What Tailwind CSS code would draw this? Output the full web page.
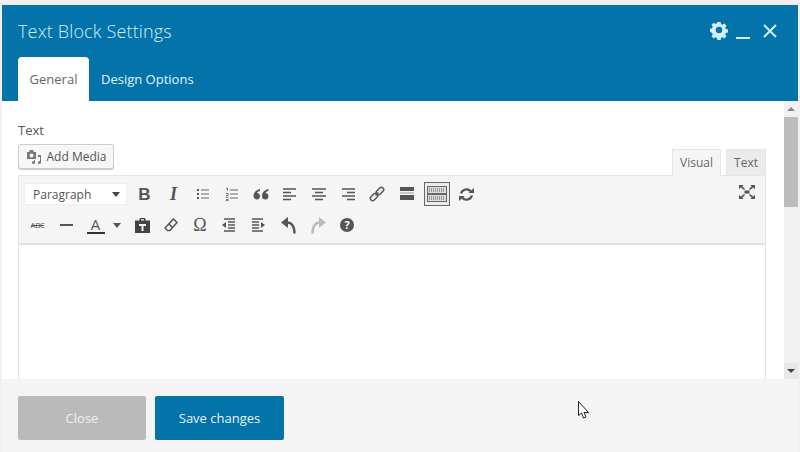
<!DOCTYPE html>
<html>
<head>
  <meta charset="UTF-8">
  <script src="https://cdn.jsdelivr.net/npm/@tailwindcss/browser@4"></script>
</head>
<body class="w-[800px] h-[452px] overflow-hidden bg-[#f0f0f0] font-['Open_Sans',sans-serif]">
  <div class="relative w-[800px] h-[452px] pt-[5px] px-[2px] flex flex-col">
    <!-- header -->
    <div class="h-[96px] shrink-0 bg-[#0473aa] flex flex-col justify-between">
      <div class="flex items-center justify-between pt-[13px] pl-[16px] pr-[20px]">
        <span class="text-[18px] font-light tracking-[0.15px] leading-[26px] text-[#d5eef9]">Text Block Settings</span>
        <div class="flex items-center">
          <svg class="w-[20px] h-[20px] mr-[7px]" viewBox="0 0 20 20"><path fill="#d3edf9" fill-rule="evenodd" d="M8.2 1h3.6l.5 2.4 1.5.7 2.1-1.3 2.4 2.5-1.3 2 .6 1.6 2.4.5v3.4l-2.4.5-.6 1.6 1.3 2-2.4 2.5-2.1-1.3-1.5.7-.5 2.4H8.200l-.5-2.4-1.500-.7-2.100 1.300-2.400-2.500 1.300-2-.6-1.600L0 11.900V8.500l2.400-.5.600-1.600-1.300-2 2.400-2.500 2.100 1.300 1.500-.7zM10 6.400a3.600 3.600 0 1 0 0 7.200 3.600 3.600 0 0 0 0-7.200z" transform="translate(1 0) scale(.9)"/></svg>
          <div class="w-[14px] h-[2px] bg-[#d3edf9] mt-[14px] mr-[12px]"></div>
          <svg class="w-[16px] h-[16px]" viewBox="0 0 16 16"><path d="M2 2l12 12M14 2L2 14" stroke="#d3edf9" stroke-width="2"/></svg>
        </div>
      </div>
      <div class="flex pl-[16px]">
        <div class="w-[71px] h-[44px] bg-white rounded-t-[4px] flex items-center justify-center pt-[1px] text-[13px] text-[#666]">General</div>
        <div class="h-[44px] pl-[12px] pt-[1px] flex items-center text-[13px] font-medium text-[#e3f3fb]">Design Options</div>
      </div>
    </div>
    <!-- body -->
    <div class="h-[278px] shrink-0 bg-white flex overflow-hidden">
      <div class="w-[782px] pl-[16px] pr-[18px] pt-[20px]">
        <div class="text-[13px] leading-[18px] text-[#555]">Text</div>
        <div class="flex items-end justify-between h-[36px]">
          <div class="self-start mt-[5px] w-[96px] h-[25px] rounded-[3px] border border-[#ccc] bg-[#f7f7f7] shadow-[0_1px_0_#ccc] flex items-center justify-center gap-[5px] text-[12px] text-[#555]">
            <svg class="w-[16px] h-[16px]" viewBox="0 0 16 16"><path fill="#777" d="M1 3h2l1-2h3l1 2h2v7H1zM12 6h3v7.500a1.500 1.500 0 1 1-1.500-1.500H14V8h-2zM6 11h3v2.500A1.500 1.500 0 1 1 7.500 12H8v-1z"/><circle cx="5.500" cy="6.500" r="2" fill="#f7f7f7"/></svg>
            <span>Add Media</span>
          </div>
          <div class="flex items-end gap-[5px] text-[12px] text-[#666] -mb-[1px]">
            <div class="w-[49px] h-[27px] bg-[#f5f5f5] border border-[#e5e5e5] border-b-0 flex items-center justify-center relative">Visual</div>
            <div class="w-[40px] h-[27px] bg-[#ebebeb] border border-[#e5e5e5] flex items-center justify-center">Text</div>
          </div>
        </div>
        <!-- editor -->
        <div class="border border-[#e5e5e5] h-[300px] bg-white">
          <div class="h-[69px] bg-[#f5f5f5] border-b-2 border-[#e2e2e2] relative pl-[4px] pt-[6px]">
            <div class="flex items-center h-[24px]">
              <div class="ml-[1px] w-[103px] h-[22px] bg-white border border-[#eee] flex items-center justify-between pl-[8px] pr-[6px] pt-[1px] text-[12px] text-[#555]">
                <span>Paragraph</span>
                <div class="w-0 h-0 border-x-[4px] border-x-transparent border-t-[5px] border-t-[#444]"></div>
              </div>
              <div class="w-[3px]"></div>
              <div class="w-[29px] flex justify-center text-[17px] leading-none font-bold text-[#555] font-['Liberation_Sans',sans-serif]">B</div>
              <div class="w-[29px] flex justify-center text-[18px] leading-none font-bold italic text-[#555] font-['Liberation_Serif',serif]">I</div>
              <div class="w-[29px] flex justify-center"><svg class="w-[14px] h-[14px]" viewBox="0 0 14 14"><path fill="#555" d="M1 2h2v2H1zM1 6h2v2H1zM1 10h2v2H1z"/><path stroke="#666" stroke-width="1.200" d="M5 3h8M5 7h8M5 11h8"/></svg></div>
              <div class="w-[29px] flex justify-center"><svg class="w-[14px] h-[14px]" viewBox="0 0 14 14"><path fill="#777" d="M1 1h2v3H2V2H1zM1 6h2.500v3H1.500v1h2v1H1V8h1.500V7H1zM1 12h2.500v2H1z"/><path stroke="#666" stroke-width="1.200" d="M5 3h8M5 7h8M5 11h8"/></svg></div>
              <div class="w-[29px] flex justify-center"><svg class="w-[16px] h-[13px]" viewBox="0 0 16 13"><path fill="#555" d="M7 1C3 2 .5 4.500.5 8a3.200 3.200 0 1 0 3.500-3c.4-1 1.500-1.700 3-2zM15.500 1c-4 1-6.500 3.500-6.500 7a3.200 3.200 0 1 0 3.500-3c.4-1 1.500-1.700 3-2z"/></svg></div>
              <div class="w-[29px] flex justify-center"><svg class="w-[14px] h-[14px]" viewBox="0 0 14 14"><path stroke="#555" stroke-width="1.700" d="M0 2h13M0 5.500h8M0 9h13M0 12.500h8"/></svg></div>
              <div class="w-[29px] flex justify-center"><svg class="w-[14px] h-[14px]" viewBox="0 0 14 14"><path stroke="#555" stroke-width="1.700" d="M0 2h14M3 5.500h8M0 9h14M3 12.500h8"/></svg></div>
              <div class="w-[29px] flex justify-center"><svg class="w-[14px] h-[14px]" viewBox="0 0 14 14"><path stroke="#555" stroke-width="1.700" d="M1 2h13M6 5.500h8M1 9h13M6 12.500h8"/></svg></div>
              <div class="w-[30px] flex justify-center"><svg class="w-[16px] h-[16px]" viewBox="0 0 16 16"><g fill="none" stroke="#555" stroke-width="1.500"><path d="M6.500 9.500l3-3"/><rect x="8.700" y="0.800" width="4.600" height="8.400" rx="2.300" transform="rotate(45 11 5)"/><rect x="2.700" y="6.800" width="4.600" height="8.400" rx="2.300" transform="rotate(45 5 11)"/></g></svg></div>
              <div class="w-[29px] flex justify-center"><svg class="w-[14px] h-[14px]" viewBox="0 0 14 14"><path fill="#555" d="M0 0h14v4H0zM0 8h14v5H0z"/><path fill="#999" d="M0 5.500h14v1H0z"/></svg></div>
              <div class="w-[30px] flex justify-center pl-[1px]"><div class="w-[26px] h-[24px] border border-[#666] bg-[#ececec] flex items-center justify-center"><svg class="w-[20px] h-[16px]" viewBox="0 0 20 16"><path fill="#666" d="M0 0h20v16H0z"/><path fill="#ddd" d="M1 1h18v6H1zM1 9h18v6H1z"/><path stroke="#555" stroke-dasharray="1 1" d="M2 3h16M2 5h16M2 11h16M2 13h16"/></svg></div></div>
              <div class="w-[29px] flex justify-center pl-[1px]"><svg class="w-[15px] h-[15px]" viewBox="0 0 16 16"><g fill="none" stroke="#555" stroke-width="2.400"><path d="M2.200 7a6 6 0 0 1 10.300-2.500"/><path d="M13.800 9a6 6 0 0 1-10.300 2.500"/></g><path fill="#555" d="M10 6.500h6V1zM6 9.500H0V15z"/></svg></div>
            </div>
            <div class="flex items-center h-[24px] mt-[7px]">
              <div class="w-[29px] flex justify-center"><span class="relative text-[8px] leading-none tracking-[-0.5px] text-[#555]">ABC<span class="absolute left-0 right-0 top-[4px] h-px bg-[#555]"></span></span></div>
              <div class="w-[29px] flex justify-center"><div class="w-[13px] h-[2px] bg-[#555]"></div></div>
              <div class="w-[29px] flex flex-col items-center"><span class="text-[15px] leading-[15px] text-[#555]">A</span><div class="w-[18px] h-[2px] bg-[#333]"></div></div>
              <div class="w-[18px] flex justify-start pl-[3px]"><div class="w-0 h-0 border-x-[4px] border-x-transparent border-t-[5px] border-t-[#555]"></div></div>
              <div class="w-[28px] flex justify-center"><svg class="w-[15px] h-[15px]" viewBox="0 0 15 15"><path fill="#444" fill-rule="evenodd" d="M0 2.500h4.500V1a1 1 0 0 1 1-1h4a1 1 0 0 1 1 1v1.500H15V15H0zM6 1.200v1.300h3V1.200zM4 6v2h2.500v5h2V8H11V6z"/></svg></div>
              <div class="w-[29px] flex justify-center"><svg class="w-[14px] h-[14px]" viewBox="0 0 14 14"><path fill="none" stroke="#555" stroke-width="1.500" d="M9.500 1L13 4.500 6 12.500H3.500L1 10z"/><path stroke="#555" stroke-width="1.500" d="M5 6l3.500 3.500"/></svg></div>
              <div class="w-[30px] flex justify-center text-[18px] leading-none text-[#555] font-['Liberation_Serif',serif]">Ω</div>
              <div class="w-[29px] flex justify-center"><svg class="w-[15px] h-[14px]" viewBox="0 0 15 14"><path stroke="#555" stroke-width="1.300" d="M2 1h11M6 4h7M6 7h7M6 10h7M2 13h11"/><path fill="#555" d="M0 7l4-3v6z"/></svg></div>
              <div class="w-[30px] flex justify-center"><svg class="w-[15px] h-[14px]" viewBox="0 0 15 14"><path stroke="#555" stroke-width="1.300" d="M0 1h11M0 4h7M0 7h7M0 10h7M0 13h11"/><path fill="#555" d="M13 7l-4-3v6z"/></svg></div>
              <div class="w-[29px] flex justify-center"><svg class="w-[16px] h-[17px]" viewBox="0 0 16 17"><path fill="#555" d="M0 5.500L7 0v11z"/><path fill="none" stroke="#555" stroke-width="2.400" d="M6 5.500c4.500 0 7.500 3.500 7.500 11"/></svg></div>
              <div class="w-[29px] flex justify-center"><svg class="w-[16px] h-[17px]" viewBox="0 0 16 17"><path fill="#bbb" d="M16 5.500L9 0v11z"/><path fill="none" stroke="#bbb" stroke-width="2.400" d="M10 5.500c-4.500 0-7.500 3.500-7.500 11"/></svg></div>
              <div class="w-[30px] flex justify-center"><div class="w-[14px] h-[14px] rounded-full bg-[#555] text-white text-[11px] leading-[14px] font-bold text-center">?</div></div>
            </div>
            <svg class="absolute right-[10px] top-[9px] w-[16px] h-[14px]" viewBox="0 0 16 14"><path fill="#555" d="M5.500 5.500h5v3h-5zM0 0h4.500L3.300 1.200 6 4 5 5 2 2.500 0 4zM16 0h-4.500l1.200 1.200L10 4l1 1 3-2.500 2 1.500zM0 14h4.500l-1.200-1.200L6 10 5 9l-3 2.500-2-1.500zM16 14h-4.500l1.200-1.200L10 10l1-1 3 2.500 2-1.500z"/></svg>
          </div>
        </div>
      </div>
      <!-- scrollbar -->
      <div class="w-[14px] bg-[#f1f1f1] flex flex-col items-center">
        <div class="h-[16px] w-full flex items-center justify-center"><div class="w-0 h-0 border-x-[4px] border-x-transparent border-b-[4px] border-b-[#888]"></div></div>
        <div class="h-[90px] w-full bg-[#bcbcbc]"></div>
        <div class="grow"></div>
        <div class="h-[16px] w-full flex items-center justify-center bg-[#e8e8e8]"><div class="w-0 h-0 border-x-[4px] border-x-transparent border-t-[4px] border-t-[#444]"></div></div>
      </div>
    </div>
    <!-- footer -->
    <div class="grow bg-[#f4f4f4] flex items-start pl-[16px] pt-[17px] gap-[9px] text-[13px]">
      <div class="w-[128px] h-[44px] pt-[1px] rounded-[2px] bg-[#bababa] text-[#efefef] flex items-center justify-center">Close</div>
      <div class="w-[129px] h-[44px] pt-[1px] rounded-[2px] bg-[#0473aa] text-[#e6f4fb] flex items-center justify-center">Save changes</div>
    </div>
    <!-- mouse pointer -->
    <svg class="absolute left-[578px] top-[401px] w-[13px] h-[19px]" viewBox="0 0 13 19"><path fill="#fff" stroke="#222" stroke-width="1" d="M.5.500v14l3-2.500 2 5 2.500-1-2-4.500h4.500z"/></svg>
  </div>
</body>
</html>
